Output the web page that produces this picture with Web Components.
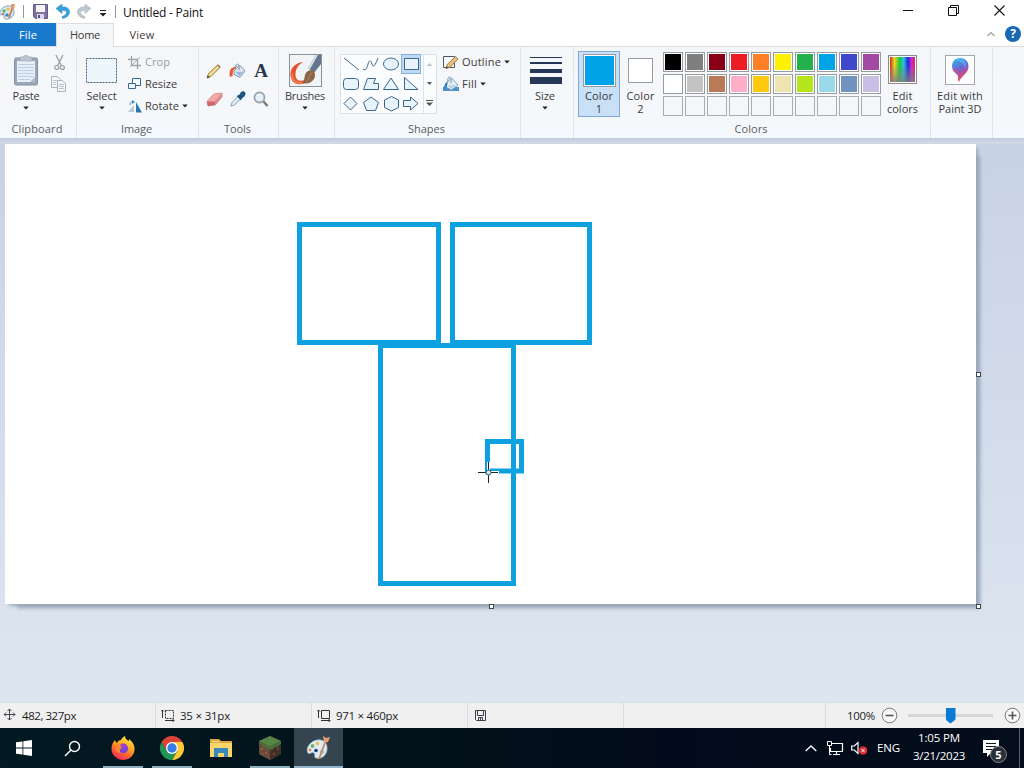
<!DOCTYPE html>
<html lang="en">
<head>
<meta charset="utf-8">
<title>Untitled - Paint</title>
<style>
  html, body { margin: 0; height: 100%; overflow: hidden; }
  body { font: 11px/13px "Open Sans", "Noto Sans", sans-serif; color: #3b3b3b; }
</style>
</head>
<body>
<paint-app></paint-app>

<script>
// every drawing in the window: [width, height, markup]
const ICONS = {
  palette: [17, 18, `<path d="M8 3C3 4 0 8 1 11c0 2 3 0 4 1s-1 3 1 4c4 1 9-2 9-7 0-4-3-7-7-6z" fill="#dcecf4" stroke="#7ba7c3"/><circle cx="5" cy="8" r="1.7" fill="#61b15b"/><circle cx="9" cy="6" r="1.6" fill="#e8b83b"/><circle cx="8" cy="12" r="1.8" fill="#4286c8"/><circle cx="4" cy="11" r="1" fill="#d44"/><path d="M14 3 10 15" stroke="#cc7842" stroke-width="1.7"/><path d="m12 1 4 0-1 5-3-1z" fill="#eb9a61"/>`],
  save: [15, 15, `<path d="M.5.5h14v14h-12l-2-2z" fill="#80729e" stroke="#65598b"/><path d="M3 1h9v7H3z" fill="#f4f3f8"/><path d="M4 10h7v5H4z" fill="#d9d9e7"/><path d="M5 11h2v3H5z" fill="#5c527f"/>`],
  undo: [14, 15, `<path d="M0 4.500 6 0v3c5-.7 8 2 7.500 6-.7 3-3.500 5-7 5.500l-.5-2c2.500-.7 4.500-2 4.500-4 0-1.700-2-2.300-4.500-2V9.500z" fill="#37a0da" stroke="#2a83bf" stroke-width=".5"/>`],
  redo: [14, 15, `<path d="M14 4.500 8 0v3C3 2.300 0 5 .5 9c.7 3 3.500 5 7 5.500l.5-2c-2.500-.7-4.500-2-4.500-4 0-1.700 2-2.300 4.500-2V9.500z" fill="#bec7d0" stroke="#a2adb9" stroke-width=".5"/>`],
  more: [8, 8, `<path d="M1 1.500h6" stroke="#222" /><path d="M.5 4h7L4 7.500z" fill="#222"/>`],
  arrow: [6, 4, `<path d="M.3.5h5.400L3 3.500z" fill="#222"/>`],
  min: [10, 11, `<path d="M0 5.500h10" stroke="#111"/>`],
  restore: [11, 11, `<path d="M.5 2.500h8v8h-8zM2.500 2.500v-2h8v8h-2" fill="none" stroke="#111"/>`],
  close: [11, 11, `<path d="m.5.5 10 10m0-10-10 10" stroke="#111" stroke-width="1.100"/>`],
  fold: [8, 6, `<path d="m.5 5 3.500-3.500L7.500 5" fill="none" stroke="#a9a9a9" stroke-width="1.400"/>`],
  paste: [26, 31, `<rect x="1.500" y="3" width="23" height="27" rx="1.500" fill="#9ba8b9" stroke="#8491a5"/><path d="M4 6h18v21H4z" fill="#e6eef6"/><path d="M5 9.500h16M5 12.500h16M5 15.500h16M5 18.500h16M5 21.500h16M5 24.500h12" stroke="#bdcfe3"/><path d="M7 2h3c0-2 6-2 6 0h3v4H7z" fill="#bcc5d0" stroke="#98a4b3" stroke-width=".6"/><path d="m17 27 5-5v5z" fill="#b2bdcc"/>`],
  cut: [11, 17, `<path d="M2 1 7.500 12M9 1 3.500 12" stroke="#9fa7ad" stroke-width="1.500"/><circle cx="2.700" cy="13.500" r="2" fill="none" stroke="#929ba2" stroke-width="1.200"/><circle cx="8.300" cy="13.500" r="2" fill="none" stroke="#929ba2" stroke-width="1.200"/>`],
  copy: [16, 17, `<g fill="#f3f6f8" stroke="#aab4be"><path d="M.5.5h6l3 3v8h-9z"/><path d="M6.500 4.500h5l3 3v8h-8z"/></g><path d="M2 4.500h4M2 6.500h3M2 8.500h3M8 8.500h5M8 10.500h5M8 12.500h5" stroke="#bac5d0"/>`],
  select: [31, 25, `<rect x=".5" y=".5" width="30" height="24" fill="#edf6fb" stroke="#45617c" stroke-dasharray="2 1"/>`],
  crop: [13, 13, `<path d="M3.500 0v9.500H13M0 3.500h9.500V13" fill="none" stroke="#9ca3ab" stroke-width="1.300"/><path d="m2 11 10-10" stroke="#a5abb2"/>`],
  resize: [14, 12, `<path d="M4.500.5h8v7h-8z" fill="#f5fafe" stroke="#356a9b"/><path d="M.5 5.500h7v5h-7z" fill="#edf6fd" stroke="#356a9b"/>`],
  rotate: [14, 13, `<path d="M6 12V5L0 12z" fill="#b9ccd9"/><path d="M8 12.500V2l6 10.500z" fill="#2878b5"/><path d="M2 5C2 2 3.500 2 5 2" fill="none" stroke="#3589c6"/><path d="m4 0 3 2-3 2z" fill="#3589c6"/>`],
  pencil: [16, 16, `<path d="m1 15 1.500-4.500L11.500 2 14 4.500l-9 9z" fill="#e8d17a" stroke="#806b43" stroke-width=".8"/><path d="m11 2.500 1.200-1.200 2.500 2.500L13.500 5z" fill="#b47e78"/><path d="m1 15 .8-2.500 1.700 1.700z" fill="#333"/><path d="m4 12 8-8" stroke="#fff3a6"/>`],
  bucket: [17, 16, `<path d="M8 3 3 5C1 6 0 9 1 14l2.500-1 .5-5z" fill="#e95a28"/><path d="m5 8 5.500-6 5.500 6-5 6.500-6-3z" fill="#dbe5f0" stroke="#6686a4" stroke-width=".8"/><path d="m6 8.500 6 .5 3-1-4.500 5.500z" fill="#9cbbd7"/><path d="M7 6C5.500 1 9-.5 10 3v4" fill="none" stroke="#768eaa"/>`],
  eraser: [17, 15, `<path d="m1 9.500 7-7.500 8-1v4l-7 8-7 1z" fill="#cf6a6e" stroke="#bc6065" stroke-width=".6"/><path d="m1 9.500 7-7.500 8-1-7 8.500z" fill="#f2a9a8"/><path d="m9 9.500 7-8.500v4l-7 8z" fill="#e08c90"/>`],
  picker: [16, 16, `<path d="m1 15 1-3.500 6-6 2.500 2.500-6 6z" fill="#dcecf5" stroke="#6d8ba4" stroke-width=".8"/><path d="m7.500 4.500 4 4M9.500 5l2-3c1-1 2.200-1 2.700-.3s.5 1.800-.3 2.800L11 7z" fill="#226399" stroke="#1c507f" stroke-width="1.800"/>`],
  zoom: [16, 17, `<circle cx="6.500" cy="6.500" r="5" fill="#e3f1fb" stroke="#9ba3ad" stroke-width="1.800"/><path d="m10.500 10.500 4 4.500" stroke="#85766e" stroke-width="2.500"/><path d="M4 5c1-2 3-2 4-2" fill="none" stroke="#fff"/>`],
  brush: [33, 33, `<rect x=".5" y=".5" width="32" height="32" fill="#f1f4f7" stroke="#8b9199"/><path d="M14 8C6 9 1.500 14 1.500 20c0 8 6 12 13 9.500l2-3.500c-6 2-10 0-10-5C6.500 15 9 11 14 8z" fill="#e3512d"/><path d="M1.500 20c0 8 6 12 13 9.500l1-2C8 29 4 26 4 19z" fill="#f1774b"/><path d="m25 19 7-9V1h-5l-8 13z" fill="#64768c"/><path d="m19 14 8-13h2l-8 14z" fill="#d3e0eb"/><path d="M13 29c4-3 1-9 6-12 3-2 7 0 7 4 0 6-6 10-13 8z" fill="#8d6648"/><path d="M17 28c4-3 3-8 6-9" fill="none" stroke="#b78d65"/>`],
  outline: [16, 15, `<path d="M.5 1.500h11v11H.5z" fill="#f7fafc" stroke="#4a5568"/><path d="m3 13.500 1.200-4 8.300-8 2.500 2.500-8 8.300z" fill="#e6bd7a" stroke="#8f673c" stroke-width=".8"/><path d="m3 13.500.6-2 1.500 1.300z" fill="#333"/>`],
  fill: [16, 16, `<path d="M0 11h16v4H0z" fill="#4c93c9"/><path d="m2.500 7.500 6-5.500 6.500 7-6.500 5-5-2.500z" fill="#e3edf4" stroke="#7491a9" stroke-width=".8"/><path d="M4.500 5.500C2.500 7 1 9 .5 13l3-1 1-4z" fill="#3a87bf"/><path d="M5 6C4 1 7-1 8 3v4" fill="none" stroke="#7893ab"/><path d="m5 9.500 8-.5-5 4z" fill="#bad0df"/>`],
  size: [33, 29, `<path d="M0 1h32v1H0zM0 6h32v2H0zM0 13h32v4H0zM0 21h32v7H0z" fill="#253858"/>`],
  paint3d: [31, 31, `<defs><linearGradient id="p" x1=".2" y1="0" x2=".6" y2="1"><stop stop-color="#36b9e9"/><stop offset=".45" stop-color="#6467d9"/><stop offset=".75" stop-color="#cf4a83"/><stop offset="1" stop-color="#ef6231"/></linearGradient></defs><rect x=".5" y=".5" width="29" height="29" fill="#fdfdfe" stroke="#a3a8ae"/><path d="M15 3c5.500 0 8.500 4 8.500 8.500 0 7-6 7.500-9.500 15.500-2-3 .5-5-2.500-8-2.500-2-4.500-4-4.500-7.500C7 6.500 10 3 15 3z" fill="url(#p)"/><path d="M8 14c3-3 5 0 5 5-2-1-4-2-5-5z" fill="#e74b70" opacity=".6"/><path d="M11 4.500c7-2 12 2 9 8.500-1-4-4-7-9-8.500z" fill="#58ccf1" opacity=".55"/>`],
  spectrum: [30, 30, `<defs><linearGradient id="h"><stop stop-color="#e1251b"/><stop offset=".18" stop-color="#e8d827"/><stop offset=".38" stop-color="#1fc73a"/><stop offset=".55" stop-color="#27c3df"/><stop offset=".72" stop-color="#2223d9"/><stop offset=".87" stop-color="#d425d8"/><stop offset="1" stop-color="#df244c"/></linearGradient><linearGradient id="v" x2="0" y2="1"><stop offset=".3" stop-color="#808080" stop-opacity="0"/><stop offset="1" stop-color="#808080" stop-opacity=".85"/></linearGradient></defs><rect x=".5" y=".5" width="28" height="28" fill="#fff" stroke="#8c8c8c"/><path d="M2 2h25v25H2z" fill="url(#h)"/><path d="M2 2h25v25H2z" fill="url(#v)"/>`],
  pos: [12, 12, `<path d="M5.500 0v11M0 5.500h11M3.500 2l2-2 2 2M3.500 9l2 2 2-2M2 3.500l-2 2 2 2M9 3.500l2 2-2 2" fill="none" stroke="#40464c"/>`],
  selsize: [14, 13, `<path d="M4.500 1.500h8v8h-8z" fill="none" stroke="#333" stroke-dasharray="2 1"/><path d="M1.500 1v8M0 2.500 1.500 1 3 2.500M4 11.500h9M11.500 10l1.500 1.500-1.500 1.500" fill="none" stroke="#333"/>`],
  imgsize: [14, 13, `<path d="M4.500 1.500h8v8h-8z" fill="none" stroke="#333"/><path d="M1.500 1v8M0 2.500 1.500 1 3 2.500M4 11.500h9M11.500 10l1.500 1.500-1.500 1.500" fill="none" stroke="#333"/>`],
  disk: [11, 11, `<path d="M.5.5h10v10h-9l-1-1zM2.500.5v5h6v-5M3.500 10.500v-3h4v3" fill="none" stroke="#3a3f4a"/><path d="M5 8h1v2H5z" fill="#444"/>`],
  minus: [17, 17, `<circle cx="8.500" cy="8.500" r="7.300" fill="#f8f8f8" stroke="#777"/><path d="M4.500 8.500h8" stroke="#555" stroke-width="1.600"/>`],
  plus: [17, 17, `<circle cx="8.500" cy="8.500" r="7.300" fill="#f8f8f8" stroke="#777"/><path d="M4.500 8.500h8M8.500 4.500v8" stroke="#555" stroke-width="1.600"/>`],
  start: [16, 16, `<path d="m0 2.300 6.500-.9v6.200H0zM7.300 1.300 16 0v7.600H7.300zM0 8.400h6.500v6.200L0 13.700zM7.300 8.400H16V16l-8.700-1.300z" fill="#fff"/>`],
  search: [17, 17, `<circle cx="10.500" cy="6.500" r="5" fill="none" stroke="#fff" stroke-width="1.400"/><path d="M7 10 1 16" stroke="#fff" stroke-width="1.500"/>`],
  firefox: [24, 24, `<defs><linearGradient id="f" x1=".8" x2=".3" y2="1"><stop stop-color="#fff04b"/><stop offset=".4" stop-color="#ffad22"/><stop offset=".7" stop-color="#ff622f"/><stop offset="1" stop-color="#e9265f"/></linearGradient></defs><path d="M4 4c0 1 1 2 2 3 1-2 2-3 4-3 1-2 2-3 4-4 0 3 2 4 4 5V3c4 3 6 7 5.500 11C23 20 18 24 12 24S.5 19 .5 13C.5 9 2 6 4 4z" fill="url(#f)"/><circle cx="12" cy="12.500" r="5" fill="#7a42d8"/><path d="M5 8c3-1 5 0 7 2-2 0-2 1-1 2-2 0-3 3-1 5-4 0-7-4-5-9z" fill="#ff872b"/><path d="M9 9c3-2 7 0 8 3l-4-1-2 1z" fill="#a53fc8"/>`],
  chrome: [24, 24, `<path d="M12 6h10.400A12 12 0 0 1 12 24l5.200-9z" fill="#fcc934"/><path d="M1.600 6 6.800 15 12 17.500 17.200 15 12 24A12 12 0 0 1 1.600 6z" fill="#219653"/><path d="M1.600 6A12 12 0 0 1 22.400 6H12L6.800 15z" fill="#dc4437"/><circle cx="12" cy="12" r="6" fill="#fff"/><circle cx="12" cy="12" r="4.700" fill="#347ee6"/>`],
  folder: [22, 20, `<path d="M0 1h9l2 2h11v16H0z" fill="#e1a33c"/><path d="M0 5h22v14H0z" fill="#f8d66b"/><path d="M2 3h7v1H2z" fill="#fff0ae"/><path d="M4 10h14v9h-4v-4H8v4H4z" fill="#398abb"/>`],
  block: [22, 24, `<path d="m11 0 11 5v13l-11 6-11-6V5z" fill="#604434"/><path d="m11 0 11 5-11 6L0 5z" fill="#568445"/><path d="m0 5 11 6v13L0 18z" fill="#6b4a39"/><path d="m11 11 11-6v13l-11 6z" fill="#422f29"/><path d="m0 5 11 6 11-6v3l-3 2v1l-3 0-3 3-2-1-3 0-2-3-2 1-2-3-1 1z" fill="#4b6f38"/><path d="M2 12h2v2H2zM6 16h2v2H6zM3 17h1v2H3z" fill="#8c654e"/><path d="M14 17h2v2h-2zM18 12h2v2h-2z" fill="#6c4736"/>`],
  paintbig: [25, 24, `<path d="M11 4C4 5-1 13 2 17c2 2 4-2 6 0s-1 4 2 5c6 2 12-4 11-11 0-5-5-8-10-7z" fill="#deebf2" stroke="#8db7cf" stroke-width=".7"/><circle cx="6.500" cy="10" r="2" fill="#7ab35e"/><circle cx="11.500" cy="7.500" r="1.800" fill="#e9bd54"/><circle cx="4" cy="14" r="1.300" fill="#f06845"/><circle cx="10" cy="14.500" r="1.800" fill="#133c68"/><circle cx="16" cy="16" r="2.300" fill="#8fc7e8"/><path d="M20 4 13 23" stroke="#ce8650" stroke-width="1.800"/><path d="m17 0 3 2 4-1-2 5-4 1z" fill="#e69e76"/>`],
  up: [12, 7, `<path d="m.7 6 5.300-5 5.300 5" fill="none" stroke="#fff" stroke-width="1.300"/>`],
  net: [17, 15, `<path d="M5 2.500h10.500v8H3.500V7M6 13.500h7M9.500 11v2" fill="none" stroke="#fff" stroke-width="1.200"/><path d="M.5.5h4v4h-4zM2.500 4.500v9h2" fill="none" stroke="#fff"/>`],
  mute: [17, 15, `<path d="M.7 5h2.500L7 1.500v11L3.200 9H.7z" fill="none" stroke="#fff" stroke-width="1.200"/><circle cx="12" cy="9.500" r="4.300" fill="#d52b36"/><path d="m10.300 7.800 3.400 3.400m0-3.400-3.400 3.400" stroke="#fff"/>`],
  note: [17, 17, `<path d="M0 0h16v13H8l-4 4v-4H0z" fill="#fff"/><path d="M3 3.500h10M3 6.500h10M3 9.500h6" stroke="#071725" stroke-width="1.200"/>`]
};

const SHAPES = [
  '<path d="m3 4 15 12"/>',
  '<path d="M2 15c3 2 4-1 5-5s3-4 4 0 3 2 6-6"/>',
  '<ellipse cx="10" cy="10" rx="7.500" ry="6"/>',
  '<path d="M3.500 4.500h14v11h-14z"/>',
  '<rect x="2.500" y="4.500" width="15" height="11" rx="3"/>',
  '<path d="M6.500 4.500h8l-2 5h5v6h-15z"/>',
  '<path d="m10 4 7.500 11.500h-15z"/>',
  '<path d="M3.500 3.500v12h13.500z"/>',
  '<path d="m9.500 3 6.500 6.500-6.500 6.500-6.500-6.500z"/>',
  '<path d="m10 3 7.500 5.500-3 8H5.500l-3-8z"/>',
  '<path d="m10.500 2.500 7 3.500v7.500l-7 3.500-7-3.500V6z"/>',
  '<path d="M2.500 6.500h7V3l7.500 6.500-7.500 6.500v-3.500h-7z"/>'
];

const COLORS = ['#000000','#7f7f7f','#880015','#ed1c24','#ff7f27','#fff200','#22b14c','#00a2e8','#3f48cc','#a349a4',
  '#ffffff','#c3c3c3','#b97a57','#ffaec9','#ffc90e','#efe4b0','#b5e61d','#99d9ea','#7092be','#c8bfe7'];

class UiElement extends HTMLElement {
  connectedCallback() {
    if (this.shadowRoot) return;
    this.attachShadow({mode: 'open'}).innerHTML = this.render();
  }
  attr(name) { return this.getAttribute(name) || ''; }
}

class UiIcon extends UiElement {
  render() {
    const [w, h, art] = ICONS[this.attr('name')];
    return `<style>:host{display:block;flex:none;width:${w}px;height:${h}px}svg{display:block}</style>
      <svg width="${w}" height="${h}" viewBox="0 0 ${w} ${h}">${art}</svg>`;
  }
}

// one line of text, tracked so that it takes the width in "w"
class UiText extends UiElement {
  render() {
    const text = this.attr('text');
    const size = this.attr('size') || '11';
    const ctx = document.createElement('canvas').getContext('2d');
    ctx.font = `${size}px "Open Sans"`;
    const w = Number(this.attr('w'));
    const gap = w ? (w - ctx.measureText(text).width) / text.length : 0;
    return `<style>:host{display:block;flex:none;white-space:pre;font-size:${size}px;letter-spacing:${gap.toFixed(3)}px}</style>${text}`;
  }
}

class RibbonGroup extends UiElement {
  render() {
    return `<style>
      :host{display:flex;flex-direction:column;box-sizing:border-box;flex:none;height:91px;border-right:1px solid #e1e5eb}
      .body{display:flex;align-items:flex-start;height:70px;padding-top:4px}
      .caption{display:flex;justify-content:center;padding:1px 2px 0 0;color:#5a5e62}
    </style>
    <div class="body"><slot></slot></div>
    <div class="caption"><ui-text text="${this.attr('caption')}" w="${this.attr('cw')}"></ui-text></div>`;
  }
}

class BigButton extends UiElement {
  render() {
    const second = this.attr('second');
    return `<style>
      :host{display:flex;flex-direction:column;align-items:center;box-sizing:border-box;flex:none;height:66px}
      :host([checked]){background:#c9e0f7;box-shadow:inset 0 0 0 1px #7da9dc}
      .pic{display:flex;align-items:center;justify-content:center;height:38px}
      ui-icon[name=arrow]{margin-top:4px}
    </style>
    <div class="pic"><slot></slot></div>
    <ui-text text="${this.attr('label')}" w="${this.attr('lw')}"></ui-text>
    ${second ? `<ui-text text="${second}" w="${this.attr('sw')}"></ui-text>` : this.hasAttribute('menu') ? '<ui-icon name="arrow"></ui-icon>' : ''}`;
  }
}

class SmallButton extends UiElement {
  render() {
    return `<style>
      :host{display:flex;align-items:center;height:22px}
      .pic{width:${this.attr('pw') || 17}px;flex:none}
      ui-text{padding-bottom:2px}
      ui-icon[name=arrow]{margin:0 0 1px 3px}
      :host([disabled]){color:#999da2}
    </style>
    <div class="pic"><ui-icon name="${this.attr('icon')}"></ui-icon></div>
    <ui-text text="${this.attr('label')}" w="${this.attr('lw')}"></ui-text>
    ${this.hasAttribute('menu') ? '<ui-icon name="arrow"></ui-icon>' : ''}`;
  }
}

class ColorBox extends UiElement {
  render() {
    const s = this.attr('size') || 20;
    return `<style>
      :host{display:block;box-sizing:border-box;width:${s}px;height:${s}px;border:1px solid #979ca2;padding:1px;background:#fff}
      :host([empty]){border-color:#a9adb1;background:#f5f6f7}
      div{height:100%;background:${this.attr('color') || 'none'}}
    </style><div></div>`;
  }
}

class ColorPalette extends UiElement {
  render() {
    let cells = COLORS.map(c => `<color-box color="${c}"></color-box>`).join('');
    for (let i = 0; i < 10; i++) cells += '<color-box empty></color-box>';
    return `<style>:host{display:grid;grid-template-columns:repeat(10,20px);gap:2px;flex:none}</style>${cells}`;
  }
}

class ShapeGallery extends UiElement {
  render() {
    const cells = SHAPES.map((s, i) => `<svg class="${i == 3 ? 'on' : ''}" width="20" height="20">${s}</svg>`).join('');
    return `<style>
      :host{display:flex;box-sizing:border-box;width:97px;height:60px;border:1px solid #dce2e9;background:#fafcfd;flex:none}
      .grid{display:grid;grid-template-columns:repeat(4,20px);grid-template-rows:repeat(3,20px);margin-top:-1px;width:83px;box-sizing:border-box;border-right:1px solid #dce2e9}
      svg{display:block;fill:#e7f4fc;stroke:#3d668f;stroke-width:1}
      svg:nth-child(-n+2){fill:none}
      .on{background:#bdd9f3;box-shadow:inset 0 0 0 1px #86b1df}
      .bar{flex:1;display:flex;flex-direction:column}
      .bar svg{width:12px;height:20px;fill:#555;stroke:none}
      .bar svg:first-child{fill:#b9bdc3}
    </style>
    <div class="grid">${cells}</div>
    <div class="bar"><svg><path d="M3 11h5L5.500 8z"/></svg><svg><path d="M3 8h5L5.500 11z"/></svg><svg><path d="M2 6h7v1H2zM2 8.500h7L5.500 12z"/></svg></div>`;
  }
}

class TitleBar extends UiElement {
  render() {
    return `<style>
      :host{display:flex;align-items:center;height:23px;background:#fff;color:#111}
      i{width:1px;height:13px;background:#979797}
      .win{display:flex;align-items:center;margin-left:auto;gap:35px;padding:0 19px 2px 0}
    </style>
    <ui-icon name="palette" style="margin-left:-1px"></ui-icon><i style="margin:0 10px 0 7px"></i>
    <ui-icon name="save" style="margin-left:-1px"></ui-icon><ui-icon name="undo" style="margin-left:8px"></ui-icon>
    <ui-icon name="redo" style="margin-left:7px"></ui-icon><ui-icon name="more" style="margin:3px 8px 0 8px"></ui-icon>
    <i style="margin:0 7px 0 0"></i><ui-text text="Untitled - Paint" size="12" w="80" style="padding-top:1px"></ui-text>
    <div class="win"><ui-icon name="min"></ui-icon><ui-icon name="restore"></ui-icon><ui-icon name="close"></ui-icon></div>`;
  }
}

class TabStrip extends UiElement {
  render() {
    return `<style>
      :host{display:flex;height:24px;background:#fff;box-shadow:inset 0 -1px #dcdddf}
      .tab{display:flex;align-items:center;justify-content:center;box-sizing:border-box;width:56px;padding-bottom:1px}
      .file{background:#1979ca;color:#fff;height:23px;padding-bottom:0}
      .home{width:58px;background:#f5f6f7;border:1px solid #dcdddf;border-bottom:0;padding-bottom:2px}
      .side{margin-left:auto;display:flex;align-items:center;gap:10px;padding:0 3px 2px 0}
      b{display:block;width:16px;height:16px;border-radius:50%;background:#1768b5;color:#fff;font-size:12px;line-height:16px;text-align:center}
    </style>
    <div class="tab file"><ui-text text="File" w="18"></ui-text></div>
    <div class="tab home"><ui-text text="Home" w="30"></ui-text></div>
    <div class="tab"><ui-text text="View" w="25"></ui-text></div>
    <div class="side"><ui-icon name="fold"></ui-icon><b>?</b></div>`;
  }
}

class PaintRibbon extends UiElement {
  render() {
    return `<style>
      :host{display:flex;height:91px;background:linear-gradient(#f5f6f8,#f5f8fc)}
      .col{display:flex;flex-direction:column}
      .tools{display:grid;grid-template-columns:24px 23px 24px;grid-auto-rows:28px;place-items:center;padding:6px 0 0 3px}
      .a{font:bold 19px/20px "Liberation Serif",serif;color:#26344d}
    </style>
    <ribbon-group caption="Clipboard" cw="51" style="width:77px">
      <big-button label="Paste" lw="27" menu style="width:52px"><ui-icon name="paste"></ui-icon></big-button>
      <div class="col" style="gap:5px;padding-top:3px;margin-left:-1px;align-items:center"><ui-icon name="cut"></ui-icon><ui-icon name="copy"></ui-icon></div>
    </ribbon-group>
    <ribbon-group caption="Image" cw="31" style="width:122px">
      <big-button label="Select" lw="30" menu style="width:49px"><ui-icon name="select"></ui-icon></big-button>
      <div class="col" style="padding-left:2px">
        <small-button icon="crop" label="Crop" lw="25" disabled></small-button>
        <small-button icon="resize" label="Resize" lw="32"></small-button>
        <small-button icon="rotate" label="Rotate" lw="34" menu></small-button>
      </div>
    </ribbon-group>
    <ribbon-group caption="Tools" cw="27" style="width:80px">
      <div class="tools">
        <ui-icon name="pencil"></ui-icon><ui-icon name="bucket"></ui-icon><span class="a">A</span>
        <ui-icon name="eraser"></ui-icon><ui-icon name="picker"></ui-icon><ui-icon name="zoom"></ui-icon>
      </div>
    </ribbon-group>
    <ribbon-group style="width:56px">
      <big-button label="Brushes" lw="40" menu style="width:52px"><ui-icon name="brush"></ui-icon></big-button>
    </ribbon-group>
    <ribbon-group caption="Shapes" cw="37" style="width:186px">
      <shape-gallery style="margin:3px 6px 0 5px"></shape-gallery>
      <div class="col">
        <small-button icon="outline" pw="19" label="Outline" lw="39" menu></small-button>
        <small-button icon="fill" pw="19" label="Fill" lw="15" menu></small-button>
      </div>
    </ribbon-group>
    <ribbon-group style="width:53px">
      <big-button label="Size" lw="20" menu style="width:48px"><ui-icon name="size" style="margin-left:2px"></ui-icon></big-button>
    </ribbon-group>
    <ribbon-group caption="Colors" cw="33" style="width:357px">
      <big-button label="Color" lw="28" second="1" checked style="width:42px;margin-left:4px"><color-box size="33" color="#00a2e8"></color-box></big-button>
      <big-button label="Color" lw="28" second="2" style="width:41px"><color-box size="25" color="#fff"></color-box></big-button>
      <color-palette style="margin:1px 0 0 2px"></color-palette>
      <big-button label="Edit" lw="20" second="colors" sw="31" style="width:41px;margin-left:1px"><ui-icon name="spectrum"></ui-icon></big-button>
    </ribbon-group>
    <ribbon-group style="width:62px">
      <big-button label="Edit with" lw="46" second="Paint 3D" sw="43" style="width:58px"><ui-icon name="paint3d"></ui-icon></big-button>
    </ribbon-group>`;
  }
}

class PaintCanvas extends UiElement {
  render() {
    return `<style>
      :host{display:block;box-sizing:border-box;flex:1;padding:6px 0 0 5px;background:linear-gradient(#bfcada,#d3d9e5 5px,#fff0 7px),linear-gradient(#c8d2e5,#dde6f0)}
      .sheet{position:relative;width:971px;height:460px;background:#fff;box-shadow:8px 8px 4px -4px #9aa8ba,3px 3px 3px -1px #8f9dafb0}
      svg{display:block}
      b{position:absolute;box-sizing:border-box;width:5px;height:5px;background:#fff;border:1px solid #3f4650}
    </style>
    <div class="sheet">
      <svg width="971" height="460" fill="none" stroke="#0ea1e0" stroke-width="5">
        <path d="M294.500 80.500h139v118h-139zM447.500 80.500h137v118h-137zM375.500 201.500h133v238h-133z"/>
        <path d="M482.500 297.500h34v29.500h-34z"/>
        <path d="M482 328.500h12M483.500 318v12" stroke="#fff" stroke-width="3"/>
        <path d="M473 328.500h20M483.500 318v21" stroke="#222" stroke-width="1"/>
        <circle cx="483.500" cy="328.500" r="2.500" fill="#d8e8f0" stroke="#175a7b" stroke-width="1"/>
      </svg>
      <b style="left:971px;top:228px"></b><b style="left:484px;top:460px"></b><b style="left:971px;top:460px"></b>
    </div>`;
  }
}

class StatusCell extends UiElement {
  render() {
    return `<style>:host{display:flex;align-items:center;box-sizing:border-box;flex:none;width:156px;padding-bottom:1px;border-right:1px solid #dadbdd}</style><slot></slot>`;
  }
}

class StatusBar extends UiElement {
  render() {
    return `<style>
      :host{display:flex;height:26px;box-sizing:border-box;background:#f0f0f1;border-top:1px solid #d4dce5;color:#1c1c1c}
      .zoom{display:flex;align-items:center;flex:1;padding-left:21px}
      .track{display:flex;align-items:center;justify-content:center;width:85px;margin:0 11px 0 10px;height:18px;background:linear-gradient(#d6d6d6,#d6d6d6) center/100% 3px no-repeat}
      .thumb{width:10px;height:16px;background:#087bd4;clip-path:polygon(0 0,100% 0,100% 75%,50% 100%,0 75%)}
    </style>
    <status-cell><ui-icon name="pos" style="margin:0 6px 0 4px"></ui-icon><ui-text text="482, 327px" size="11.5" w="54"></ui-text></status-cell>
    <status-cell><ui-icon name="selsize" style="margin:0 5px"></ui-icon><ui-text text="35 × 31px" size="11.5" w="50"></ui-text></status-cell>
    <status-cell><ui-icon name="imgsize" style="margin:0 5px"></ui-icon><ui-text text="971 × 460px" size="11.5" w="62"></ui-text></status-cell>
    <status-cell><ui-icon name="disk" style="margin-left:7px"></ui-icon></status-cell>
    <status-cell style="width:202px"></status-cell>
    <div class="zoom"><ui-text text="100%" size="11.5" w="28"></ui-text>
      <ui-icon name="minus" style="margin-left:6px"></ui-icon>
      <div class="track"><div class="thumb"></div></div><ui-icon name="plus"></ui-icon></div>`;
  }
}

class TaskButton extends UiElement {
  render() {
    return `<style>
      :host{display:flex;align-items:center;justify-content:center;box-sizing:border-box;width:49px;height:40px;flex:none}
      :host([open]){background:linear-gradient(#8daebf,#8daebf) center bottom/40px 2px no-repeat}
      :host([active]){background:#34454f;border-bottom:2px solid #91b5cb;padding-top:2px}
    </style><ui-icon name="${this.attr('icon')}"></ui-icon>`;
  }
}

class TaskBar extends UiElement {
  render() {
    return `<style>
      :host{display:flex;height:40px;background:linear-gradient(90deg,#031a22,#021019 45%,#020b1b 65%,#030d1b);color:#fff}
      .tray{display:flex;align-items:center;margin-left:auto}
      .clock{display:flex;flex-direction:column;align-items:center;width:54px;margin:0 17px 0 12px;gap:5px;padding-bottom:3px}
      .note{position:relative}
      .badge{position:absolute;left:7px;top:6px;box-sizing:border-box;width:17px;height:17px;border:1px solid #828991;border-radius:50%;background:#2b3036;text-align:center;font-size:11px;line-height:15px;font-weight:bold}
      .edge{width:1px;height:40px;margin:0 4px 0 19px;background:#59636d}
    </style>
    <task-button icon="start" style="width:48px"></task-button><task-button icon="search" style="width:48px"></task-button>
    <task-button icon="firefox" open style="margin-left:2px"></task-button><task-button icon="chrome" open></task-button>
    <task-button icon="folder"></task-button><task-button icon="block" open></task-button>
    <task-button icon="paintbig" active></task-button>
    <div class="tray">
      <ui-icon name="up" style="margin-right:10px"></ui-icon><ui-icon name="net" style="margin-right:7px"></ui-icon>
      <ui-icon name="mute" style="margin-right:9px"></ui-icon><ui-text text="ENG" size="11.5" w="23" style="padding-bottom:2px"></ui-text>
      <div class="clock"><ui-text text="1:05 PM" size="11.5" w="42"></ui-text><ui-text text="3/21/2023" size="11.5" w="52"></ui-text></div>
      <div class="note"><ui-icon name="note"></ui-icon><div class="badge">5</div></div>
      <div class="edge"></div>
    </div>`;
  }
}

class PaintApp extends UiElement {
  render() {
    return `<style>:host{display:flex;flex-direction:column;width:1024px;height:768px;overflow:hidden}</style>
      <title-bar></title-bar><tab-strip></tab-strip><paint-ribbon></paint-ribbon>
      <paint-canvas></paint-canvas><status-bar></status-bar><task-bar></task-bar>`;
  }
}

customElements.define('ui-icon', UiIcon);
customElements.define('ui-text', UiText);
customElements.define('ribbon-group', RibbonGroup);
customElements.define('big-button', BigButton);
customElements.define('small-button', SmallButton);
customElements.define('color-box', ColorBox);
customElements.define('color-palette', ColorPalette);
customElements.define('shape-gallery', ShapeGallery);
customElements.define('title-bar', TitleBar);
customElements.define('tab-strip', TabStrip);
customElements.define('paint-ribbon', PaintRibbon);
customElements.define('paint-canvas', PaintCanvas);
customElements.define('status-cell', StatusCell);
customElements.define('status-bar', StatusBar);
customElements.define('task-button', TaskButton);
customElements.define('task-bar', TaskBar);
customElements.define('paint-app', PaintApp);
</script>
</body>
</html>
